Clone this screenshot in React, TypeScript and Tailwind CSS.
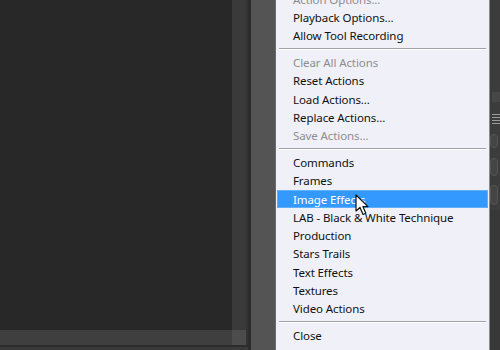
import React from "react";

type Item = { label: string; disabled?: boolean; active?: boolean } | "sep";

const items: Item[] = [
  { label: "Action Options...", disabled: true },
  { label: "Playback Options..." },
  { label: "Allow Tool Recording" },
  "sep",
  { label: "Clear All Actions", disabled: true },
  { label: "Reset Actions" },
  { label: "Load Actions..." },
  { label: "Replace Actions..." },
  { label: "Save Actions...", disabled: true },
  "sep",
  { label: "Commands" },
  { label: "Frames" },
  { label: "Image Effects", active: true },
  { label: "LAB - Black & White Technique" },
  { label: "Production" },
  { label: "Stars Trails" },
  { label: "Text Effects" },
  { label: "Textures" },
  { label: "Video Actions" },
  "sep",
  { label: "Close" },
];

function Cursor() {
  return (
    <svg
      className="absolute left-[355px] top-[194px]"
      width="16"
      height="22"
      viewBox="0 0 16 22"
    >
      <path
        d="M1 1 L1 17 L5 13.5 L8 20.5 L10.8 19.3 L7.9 12.6 L13 12.6 Z"
        fill="#ffffff"
        stroke="#111"
        strokeWidth="1.2"
        strokeLinejoin="round"
      />
    </svg>
  );
}

export default function App() {
  return (
    <div
      className="relative flex h-[350px] w-[500px] overflow-hidden bg-[#282828]"
      style={{ fontFamily: '"Noto Sans", "Open Sans", sans-serif' }}
    >
      {/* left dark canvas */}
      <div className="flex w-[248px] shrink-0 flex-col">
        <div className="flex flex-1">
          <div className="w-[232px] bg-[#282828]" />
          <div className="w-[16px] bg-[#3a3a3a] border-r-2 border-[#333]" />
        </div>
        <div className="flex h-[15px]">
          <div className="w-[232px] bg-[#3f3f3f]" />
          <div className="w-[16px] bg-[#4c4c4c] border-r-2 border-[#333]" />
        </div>
        <div className="h-[2px] bg-[#2c2c2c]" />
        <div className="h-[3px] bg-[#3a3a3a]" />
      </div>
      <div className="w-[3px] shrink-0 bg-[#2b2b2b]" />
      <div className="w-[24px] shrink-0 bg-[#545454]" />

      {/* menu */}
      <div className="w-[215px] shrink-0 border-l border-[#6a6a6a] border-r border-r-[#8a8a8a] bg-[#f0f0f8]">
        <div className="mt-[-10px] flex flex-col">
          {items.map((it, i) =>
            it === "sep" ? (
              <div key={i} className="h-[8.75px] px-[2px] pt-[3px]">
                <div className="mx-[1px] h-px bg-[#a0a0a8]" />
                <div className="mx-[1px] h-px bg-white" />
              </div>
            ) : (
              <div
                key={i}
                className={
                  "flex h-[18.25px] items-center whitespace-nowrap text-[11.5px] tracking-[-0.1px] " +
                  (it.active
                    ? "mx-[1px] pl-[15px] border border-[#5fb0ff] bg-[#3399ff] text-white"
                    : it.disabled
                    ? "pl-[17px] text-[#8d8d8d]"
                    : "pl-[17px] text-[#111]")
                }
              >
                {it.label}
              </div>
            )
          )}
        </div>
      </div>

      {/* right side panel strip */}
      <div className="relative flex-1 bg-[#3c3c3c]">
        <div className="absolute left-[2px] top-[92px] h-[10px] w-[8px] bg-[#474747]" />
        <div className="absolute left-[2px] top-[114px] flex flex-col gap-[2px]">
          <div className="h-px w-[8px] bg-[#9a9a9a]" />
          <div className="h-px w-[8px] bg-[#9a9a9a]" />
          <div className="h-px w-[8px] bg-[#9a9a9a]" />
          <div className="h-px w-[8px] bg-[#9a9a9a]" />
        </div>
        <div className="absolute left-0 top-[134px] h-[14px] w-[8px] rounded-sm border border-[#555] bg-[#444]" />
        <div className="absolute left-0 top-[158px] h-[18px] w-[8px] rounded-sm border border-[#555] bg-[#444]" />
        <div className="absolute left-0 top-[185px] h-[20px] w-[8px] rounded-sm border border-[#555] bg-[#444]" />
        <div className="absolute left-0 top-[210px] h-[140px] w-[10px] bg-[#383838]" />
      </div>

      <Cursor />
    </div>
  );
}
